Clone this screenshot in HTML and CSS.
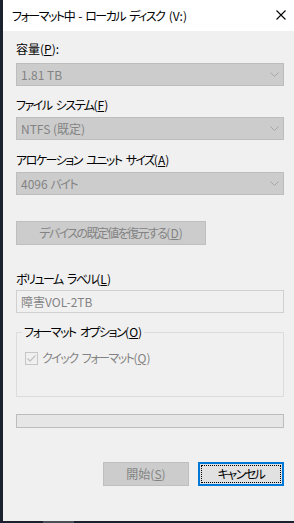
FILE: index.html
```html
<!DOCTYPE html>
<html lang="ja">
<head>
    <meta charset="UTF-8">
    <meta name="viewport" content="width=device-width, initial-scale=1.0">
    <title>フォーマット中 - ローカル ディスク (V:)</title>
    <link rel="stylesheet" href="styles.css">
</head>
<body>
    <div class="window">
        <div class="titlebar">
            <span class="title"><span class="kana">フォーマット中 - ローカル ディスク </span>(V:)</span>
            <svg class="close" width="10" height="10" viewBox="0 0 10 10">
                <path d="M0.5 0.5 L9.5 9.5 M9.5 0.5 L0.5 9.5" stroke="#000" stroke-width="1.1" fill="none"/>
            </svg>
        </div>

        <div class="content">
            <div class="field-label lbl-capacity">容量(<u>P</u>):</div>
            <div class="combo combo-capacity">
                <span>1.81 TB</span>
                <svg width="9" height="5" viewBox="0 0 9 5"><path d="M0.5 0.5 L4.5 4.5 L8.5 0.5" stroke="#a6a6a6" fill="none"/></svg>
            </div>

            <div class="field-label lbl-fs"><span class="kana">ファイル システム</span>(<u>F</u>)</div>
            <div class="combo combo-fs">
                <span>NTFS (既定)</span>
                <svg width="9" height="5" viewBox="0 0 9 5"><path d="M0.5 0.5 L4.5 4.5 L8.5 0.5" stroke="#a6a6a6" fill="none"/></svg>
            </div>

            <div class="field-label lbl-alloc"><span class="kana">アロケーション ユニット サイズ</span>(<u>A</u>)</div>
            <div class="combo combo-alloc">
                <span>4096 <span class="kana">バイト</span></span>
                <svg width="9" height="5" viewBox="0 0 9 5"><path d="M0.5 0.5 L4.5 4.5 L8.5 0.5" stroke="#a6a6a6" fill="none"/></svg>
            </div>

            <button class="btn btn-disabled btn-restore" disabled><span class="kana">デバイスの既定値を復元する</span>(<u>D</u>)</button>

            <div class="field-label lbl-volume"><span class="kana">ボリューム ラベル</span>(<u>L</u>)</div>
            <div class="textbox">障害VOL-2TB</div>

            <fieldset class="options">
                <legend><span class="kana">フォーマット オプション</span>(<u>O</u>)</legend>
                <div class="check-row">
                    <span class="checkbox">
                        <svg width="11" height="11" viewBox="0 0 11 11"><path d="M1.5 5.5 L4 8 L9.5 2.5" stroke="#c2c2c2" stroke-width="1.3" fill="none"/></svg>
                    </span>
                    <span class="check-text"><span class="kana">クイック フォーマット</span>(<u>Q</u>)</span>
                </div>
            </fieldset>

            <div class="progress"></div>

            <div class="actions">
                <button class="btn btn-disabled btn-action" disabled>開始(<u>S</u>)</button>
                <button class="btn btn-default btn-action"><span class="focus-rect"><span class="kana">キャンセル</span></span></button>
            </div>
        </div>
    </div>
    <div class="bottom-edge"></div>
</body>
</html>
```

FILE: styles.css
```css
body {
    margin: 0;
    width: 294px;
    height: 523px;
    overflow: hidden;
    display: flex;
    flex-direction: column;
    background-color: #1a2230;
    font-family: "Noto Sans CJK JP", "Noto Sans", sans-serif;
    font-size: 12px;
    font-feature-settings: "palt";
    color: #000;
}

/* Noto kana run wider than the dialog's UI font, so tighten them */
.kana {
    letter-spacing: -1.5px;
    word-spacing: 3px;
}

.window {
    flex: 1;
    display: flex;
    flex-direction: column;
    border-left: 3px solid #1a2230;
    background-color: #f0f0f0;
}

.titlebar {
    height: 31px;
    background-color: #fff;
    display: flex;
    align-items: center;
    justify-content: space-between;
    padding: 1px 8px 0 9px;
    box-sizing: border-box;
}

.title {
    line-height: 16px;
}

.close {
    margin-top: -2px;
}

.content {
    display: flex;
    flex-direction: column;
    padding: 0 10px 0 13px;
}

.field-label {
    line-height: 16px;
    height: 16px;
}

.lbl-capacity { margin-top: 10px; }
.lbl-fs { margin-top: 11px; }
.lbl-alloc { margin-top: 12px; }
.lbl-volume { margin-top: 26px; }

.combo {
    height: 23px;
    box-sizing: border-box;
    border: 1px solid #bdbdbd;
    background-color: #cccccc;
    color: #838383;
    display: flex;
    align-items: center;
    justify-content: space-between;
    padding: 0 4px 0 4px;
    line-height: 16px;
}

.combo-capacity { margin-top: 6px; }
.combo-fs { margin-top: 4px; }
.combo-alloc { margin-top: 4px; }

.btn {
    font-family: inherit;
    font-size: 12px;
    font-feature-settings: "palt";
    height: 24px;
    box-sizing: border-box;
    padding: 0;
    line-height: 16px;
}

.btn-disabled {
    background-color: #cccccc;
    border: 1px solid #bfbfbf;
    color: #838383;
}

.btn-restore {
    width: 190px;
    margin-top: 26px;
}

.btn-restore .kana {
    letter-spacing: -1.6px;
}

.textbox {
    margin-top: 3px;
    height: 23px;
    box-sizing: border-box;
    border: 1px solid #d0d0d0;
    background-color: #f0f0f0;
    color: #838383;
    padding-left: 4px;
    display: flex;
    align-items: center;
    line-height: 16px;
}

.options {
    margin: 11px 0 0 0;
    padding: 0 5px 30px 8px;
    border: 1px solid #dcdcdc;
    min-width: 0;
}

.options legend {
    padding: 0 2px;
    margin-left: -3px;
    line-height: 16px;
}

.check-row {
    margin-top: 10px;
    display: flex;
    align-items: center;
    line-height: 16px;
    color: #838383;
}

.checkbox {
    width: 13px;
    height: 13px;
    box-sizing: border-box;
    border: 1px solid #c6c6c6;
    background-color: #f0f0f0;
    display: flex;
    align-items: center;
    justify-content: center;
    margin-right: 4px;
}

.progress {
    margin-top: 17px;
    height: 14px;
    box-sizing: border-box;
    border: 1px solid #bcbcbc;
    background-color: #e6e6e6;
}

.actions {
    margin-top: 34px;
    display: flex;
    justify-content: flex-end;
    gap: 9px;
}

.btn-action {
    width: 86px;
}

.btn-default {
    background-color: #e1e1e1;
    border: 2px solid #0078d7;
    color: #000;
    padding: 1px;
}

.focus-rect {
    display: flex;
    align-items: center;
    justify-content: center;
    height: 100%;
    box-sizing: border-box;
    border: 1px dotted #000;
}

.bottom-edge {
    height: 2px;
    background: linear-gradient(to right, #1a2230 0, #1a2230 43px, #4a5058 43px, #4a5058 74px, #1a2230 74px);
}
```
